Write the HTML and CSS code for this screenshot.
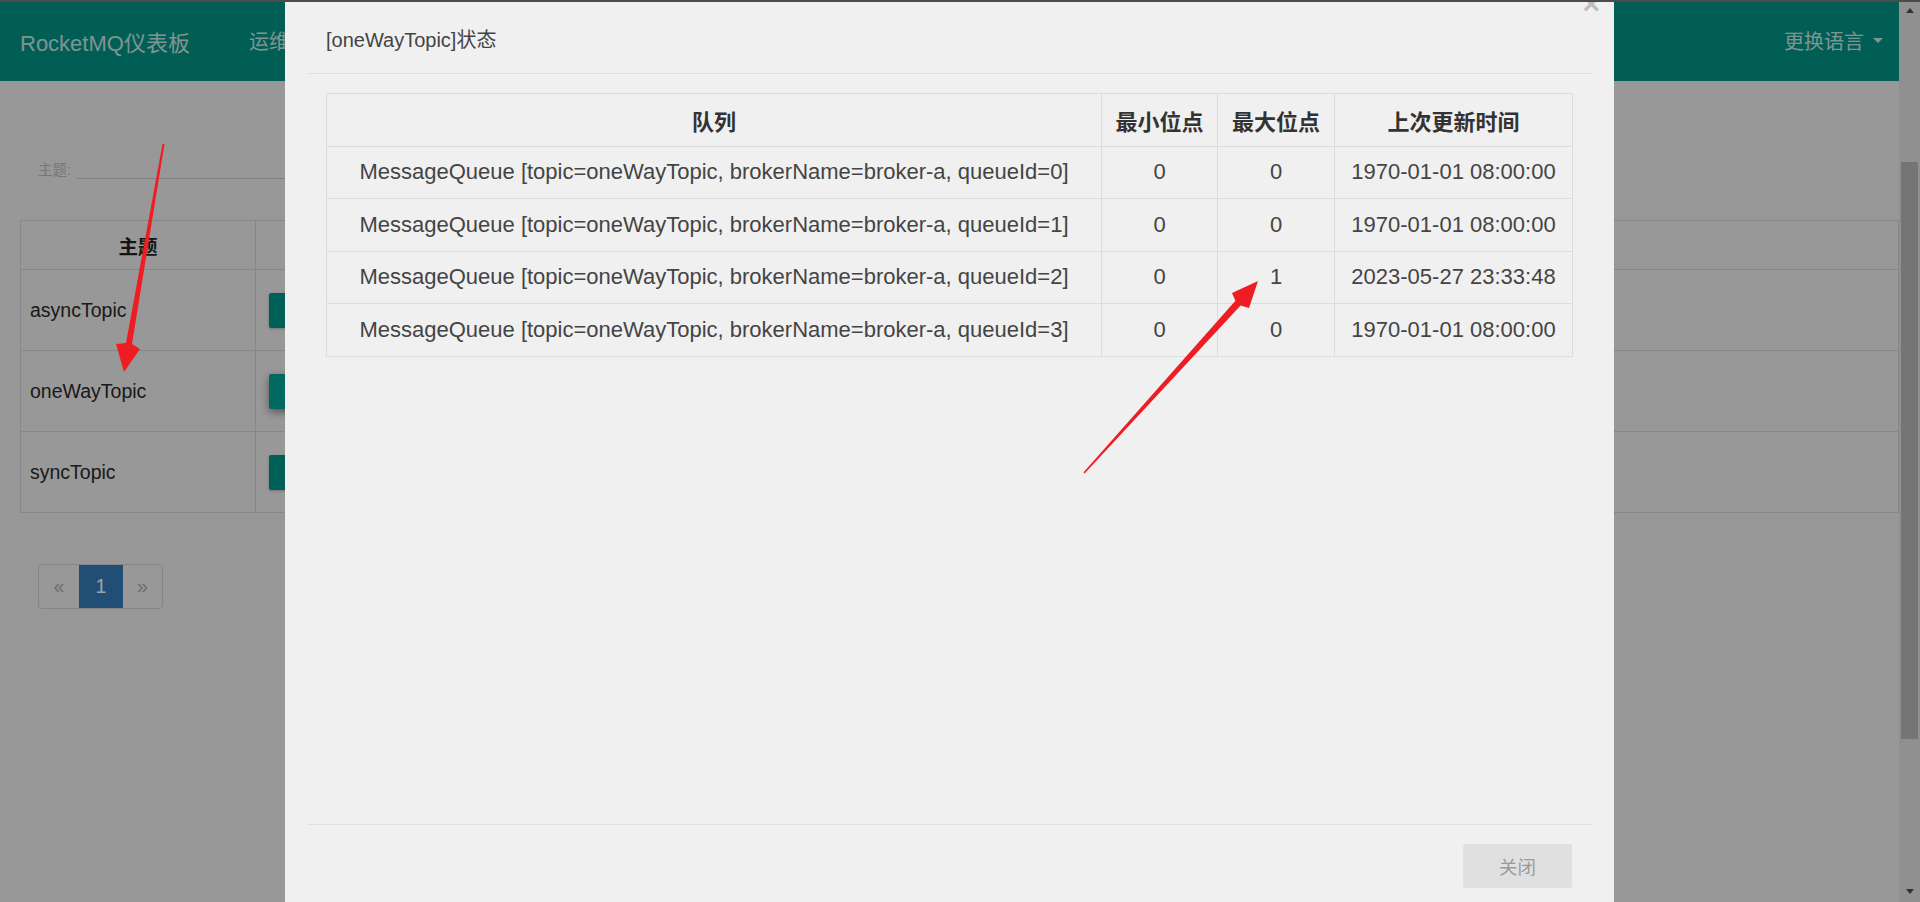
FILE: index.html
```html
<!DOCTYPE html>
<html lang="zh-CN">
<head>
<meta charset="utf-8">
<title>RocketMQ仪表板</title>
<link rel="stylesheet" href="styles.css">
</head>
<body>
<div class="app">
  <div class="page">
    <nav class="navbar">
      <span class="brand">RocketMQ仪表板</span>
      <div class="nav-links">
        <span>运维</span>
      </div>
      <span class="nav-right">更换语言<span class="caret"></span></span>
    </nav>
    <main class="content">
      <div class="search">
        <label>主题:</label>
        <span class="input"></span>
      </div>
      <table class="topics">
        <thead>
          <tr><th class="col-topic">主题</th><th></th></tr>
        </thead>
        <tbody>
          <tr>
            <td>asyncTopic</td>
            <td><div class="btn-row"><span class="btn"></span></div></td>
          </tr>
          <tr>
            <td>oneWayTopic</td>
            <td><div class="btn-row"><span class="btn raised"></span></div></td>
          </tr>
          <tr>
            <td>syncTopic</td>
            <td><div class="btn-row"><span class="btn"></span></div></td>
          </tr>
        </tbody>
      </table>
      <div class="pager">
        <span class="prev">«</span>
        <span class="cur">1</span>
        <span class="next">»</span>
      </div>
    </main>
  </div>
  <div class="scrollbar">
    <div class="sb-up"></div>
    <div class="sb-thumb"></div>
    <div class="sb-down"></div>
  </div>
</div>

<div class="backdrop"></div>

<div class="modal">
  <div class="modal-header">
    <span class="close">×</span>
    <h4 class="modal-title">[oneWayTopic]状态</h4>
  </div>
  <div class="modal-body">
    <table class="queue-table">
      <colgroup>
        <col class="c-queue"><col class="c-min"><col class="c-max"><col class="c-time">
      </colgroup>
      <thead>
        <tr><th>队列</th><th>最小位点</th><th>最大位点</th><th>上次更新时间</th></tr>
      </thead>
      <tbody>
        <tr><td>MessageQueue [topic=oneWayTopic, brokerName=broker-a, queueId=0]</td><td>0</td><td>0</td><td>1970-01-01 08:00:00</td></tr>
        <tr><td>MessageQueue [topic=oneWayTopic, brokerName=broker-a, queueId=1]</td><td>0</td><td>0</td><td>1970-01-01 08:00:00</td></tr>
        <tr><td>MessageQueue [topic=oneWayTopic, brokerName=broker-a, queueId=2]</td><td>0</td><td>1</td><td>2023-05-27 23:33:48</td></tr>
        <tr><td>MessageQueue [topic=oneWayTopic, brokerName=broker-a, queueId=3]</td><td>0</td><td>0</td><td>1970-01-01 08:00:00</td></tr>
      </tbody>
    </table>
  </div>
  <div class="modal-footer">
    <span class="btn-close">关闭</span>
  </div>
</div>

<svg class="annot" viewBox="0 0 1920 902" width="1920" height="902" aria-hidden="true">
  <polygon points="162.5,144 164.5,144 132,344 140,349 124,372 116,344 126,343" fill="#ee1d23"/>
  <polygon points="1083.4,472.5 1235.4,300.7 1232,293 1258,281 1249,308 1240.6,305.4 1084.6,473.5" fill="#ee1d23"/>
</svg>

<div class="frame-top"></div>
</body>
</html>
```

FILE: styles.css
```css
* {
  box-sizing: border-box;
}

html,
body {
  margin: 0;
  padding: 0;
  height: 100%;
  overflow: hidden;
}

body {
  background: #eeeeee;
  font-family: "Liberation Sans", "Noto Sans CJK SC", sans-serif;
  color: #333;
}

.app {
  display: flex;
  height: 902px;
}

.page {
  flex: 1;
  min-width: 0;
}

/* ---------- navbar ---------- */
.navbar {
  height: 81px;
  background: #009385;
  display: flex;
  align-items: center;
  padding: 0 16px 0 20px;
  color: rgba(255, 255, 255, 0.8);
}

.brand {
  font-size: 22px;
}

.nav-links {
  display: flex;
  gap: 40px;
  margin-left: 59px;
  font-size: 20px;
}

.nav-right {
  margin-left: auto;
  font-size: 20px;
  display: flex;
  align-items: center;
}

.caret {
  width: 0;
  height: 0;
  border-left: 5px solid transparent;
  border-right: 5px solid transparent;
  border-top: 5px solid currentColor;
  margin-left: 9px;
}

/* ---------- content ---------- */
.content {
  padding-left: 20px;
}

.search {
  display: flex;
  align-items: center;
  height: 40px;
  margin-top: 67px;
  padding-left: 18px;
}

.search label {
  font-size: 14.5px;
  color: #bbbbbb;
}

.search .input {
  width: 500px;
  height: 21px;
  border-bottom: 1px solid #c8c8c8;
  margin-left: 6px;
}

.topics {
  width: 100%;
  border-collapse: collapse;
  margin-top: 32px;
  font-size: 19.5px;
}

.topics th,
.topics td {
  border: 1px solid #d4d4d4;
}

.topics th {
  height: 49px;
  font-weight: bold;
  color: #222;
}

.topics td {
  height: 81px;
  padding: 0 10px 0 9px;
  color: #2a2a2a;
}

.topics .col-topic {
  width: 235px;
}

.btn-row {
  display: flex;
  gap: 10px;
  padding-left: 4px;
}

.btn {
  display: block;
  width: 90px;
  height: 35px;
  background: #009688;
  border-radius: 2px;
  box-shadow: 0 1px 3px rgba(0, 0, 0, 0.25);
}

.btn.raised {
  background: #00a595;
  box-shadow: 0 3px 9px rgba(0, 0, 0, 0.45);
}

.pager {
  display: inline-flex;
  margin: 51px 0 0 18px;
  border: 1px solid #d0d0d0;
  border-radius: 4px;
  overflow: hidden;
  font-size: 19.5px;
}

.pager span {
  display: flex;
  align-items: center;
  justify-content: center;
  height: 43px;
  color: #a8a8a8;
}

.pager .prev {
  width: 40px;
}

.pager .cur {
  width: 44px;
  background: #327ab8;
  color: #ffffff;
}

.pager .next {
  width: 39px;
}

/* ---------- scrollbar ---------- */
.scrollbar {
  width: 21px;
  background: #e2e2e2;
  display: flex;
  flex-direction: column;
  align-items: center;
}

.sb-up,
.sb-down {
  height: 21px;
  width: 21px;
  display: flex;
  align-items: center;
  justify-content: center;
}

.sb-up::before {
  content: "";
  border-left: 4px solid transparent;
  border-right: 4px solid transparent;
  border-bottom: 5px solid #505050;
}

.sb-down::before {
  content: "";
  border-left: 4px solid transparent;
  border-right: 4px solid transparent;
  border-top: 5px solid #505050;
}

.sb-thumb {
  width: 17px;
  height: 577px;
  margin-top: 141px;
  background: #b8b8b8;
}

.sb-down {
  margin-top: auto;
}

/* ---------- modal ---------- */
.backdrop {
  position: fixed;
  inset: 0;
  background: rgba(0, 0, 0, 0.36);
}

.modal {
  position: fixed;
  top: 0;
  left: 285px;
  width: 1329px;
  background: #f0f0f0;
  color: #444;
}

.modal-header {
  position: relative;
  margin: 0 22px;
  padding: 26px 19px 19px;
  border-bottom: 1px solid #e0e0e0;
}

.modal-title {
  margin: 0;
  font-size: 20px;
  line-height: 28px;
  font-weight: normal;
  color: #444;
}

.close {
  position: absolute;
  top: -11px;
  right: -8px;
  font-size: 30px;
  line-height: 30px;
  font-weight: bold;
  color: #bebebe;
}

.modal-body {
  margin: 0 22px;
  padding: 19px 20px 0 19px;
  height: 750px;
}

.queue-table {
  width: 1246px;
  border-collapse: collapse;
  font-size: 22px;
  text-align: center;
  table-layout: fixed;
}

.queue-table .c-queue { width: 775px; }
.queue-table .c-min { width: 116px; }
.queue-table .c-max { width: 117px; }
.queue-table .c-time { width: 238px; }

.queue-table th,
.queue-table td {
  border: 1px solid #dcdcdc;
  padding: 0 8px;
  height: 52.5px;
  white-space: nowrap;
}

.queue-table th {
  font-weight: bold;
  color: #333;
}

.queue-table td {
  color: #444;
}

.modal-footer {
  margin: 0 22px;
  border-top: 1px solid #e0e0e0;
  padding: 19px 20px 20px;
  display: flex;
  justify-content: flex-end;
}

.btn-close {
  width: 109px;
  height: 44px;
  display: flex;
  align-items: center;
  justify-content: center;
  background: #e0e0e0;
  border-radius: 3px;
  color: #9a9a9a;
  font-size: 18.5px;
}

/* ---------- annotations ---------- */
.annot {
  position: fixed;
  top: 0;
  left: 0;
  pointer-events: none;
}

.frame-top {
  position: fixed;
  top: 0;
  left: 0;
  right: 0;
  height: 2px;
  background: #4b4b4b;
}
```
